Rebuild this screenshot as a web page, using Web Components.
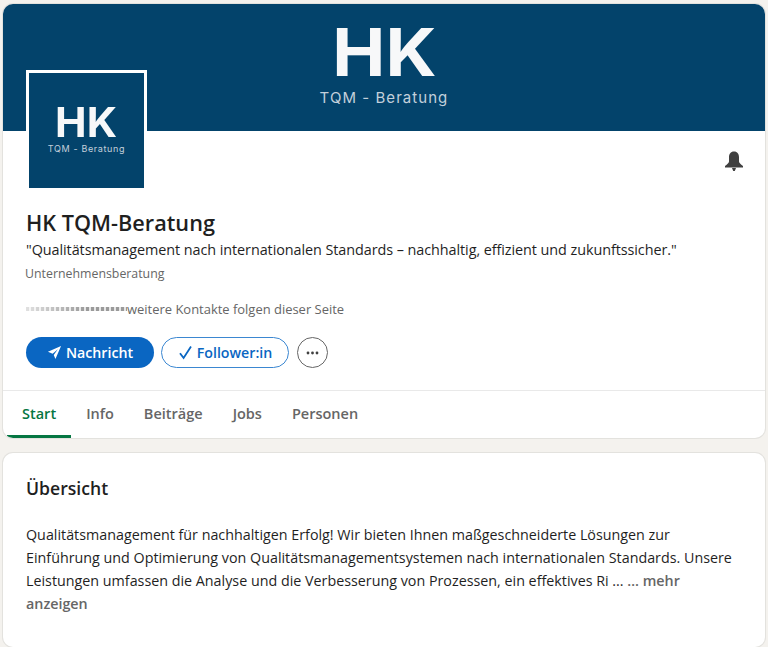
<!DOCTYPE html>
<html lang="de">
<head>
<meta charset="utf-8">
<title>HK TQM-Beratung</title>
<style>
  html, body { margin: 0; height: 647px; overflow: hidden; background: #f4f2ee; }
  body { font-family: "Open Sans", "Noto Sans", sans-serif; color: #1f1f1f; }
</style>
</head>
<body>
<template id="hk-logo-tpl">
  <style>
    :host { display: flex; flex-direction: column; align-items: center; color: #f7f8f9; font-family: Inter, "Liberation Sans", sans-serif; }
    .big { font-weight: 700; font-size: var(--big, 66px); line-height: var(--big-lh, 58px); transform: scaleX(var(--sx, 1.076)); }
    .small { font-weight: 400; color: #c3d0db; margin-top: var(--gap, 7px); font-size: var(--small, 15px); line-height: var(--small-lh, 20px); letter-spacing: .07em; white-space: nowrap; }
  </style>
  <div class="big">HK</div>
  <div class="small">TQM - Beratung</div>
</template>

<script>
  class HkLogo extends HTMLElement {
    connectedCallback() {
      this.attachShadow({ mode: 'open' });
      this.shadowRoot.appendChild(document.getElementById('hk-logo-tpl').content.cloneNode(true));
    }
  }
  customElements.define('hk-logo', HkLogo);

  class PageCard extends HTMLElement {
    connectedCallback() {
      this.attachShadow({ mode: 'open' });
      this.shadowRoot.innerHTML = `
        <style>
          :host {
            display: block;
            margin: 0 3px;
            background: #fff;
            border-radius: 10px;
            box-shadow: 0 0 0 1px rgba(140, 140, 140, .16);
            overflow: hidden;
          }
        </style>
        <slot></slot>
      `;
    }
  }
  customElements.define('page-card', PageCard);

  class CompanyHeader extends HTMLElement {
    connectedCallback() {
      this.attachShadow({ mode: 'open' });
      this.shadowRoot.innerHTML = `
        <style>
          :host { display: block; }
          .banner { height: 127px; background: #03436b; display: flex; justify-content: center; padding-top: 19px; box-sizing: border-box; }
          .body { display: flow-root; position: relative; padding: 0 23px; height: 259px; box-sizing: border-box; }
          .avatar {
            width: 115px; height: 82.5px; margin-top: -61px;
            position: relative;
            border: 3px solid #fff;
            background: #03436b;
            display: flex; justify-content: center; padding-top: 32.5px;
            --big: 41px; --big-lh: 33px; --small: 9px; --small-lh: 14px; --gap: 3.5px; --sx: 1.03;
          }
          h1 { margin: 17px 0 0; font-size: 21.7px; line-height: 30px; font-weight: 600; color: #1f1f1f; }
          .tag { margin: 1px 0 0; font-size: 14.4px; letter-spacing: -.07px; line-height: 22px; color: #1f1f1f; white-space: nowrap; }
          .cat { margin: 3px 0 0 -1px; font-size: 12.35px; line-height: 20px; color: #666; }
          .follow { display: flex; align-items: center; margin-top: 15px; font-size: 12.96px; line-height: 20px; font-weight: 500; color: #666; }
          .faces { width: 101px; height: 4px; filter: blur(.7px); background: repeating-linear-gradient(90deg, #9a9a9a 0 3px, #e6e6e6 3px 5px); -webkit-mask-image: linear-gradient(90deg, rgba(0,0,0,.3), #000 60%); }
          .actions { display: flex; align-items: center; gap: 7px; margin-top: 18px; }
          .bell { position: absolute; right: 21px; top: 20px; width: 20px; height: 20px; }
        </style>
        <div class="banner"><hk-logo></hk-logo></div>
        <div class="body">
          <div class="avatar"><hk-logo></hk-logo></div>
          <svg class="bell" viewBox="0 0 20 20" fill="#404040"><path d="M10 0.5C6.6 0.5 5 3.2 5 6.2V10.5C5 12 3.4 13 1 15V16.5H19V15C16.6 13 15 12 15 10.5V6.2C15 3.2 13.4 0.5 10 0.5Z"/><path d="M8 17H12L10.8 20H9.2Z"/></svg>
          <h1>HK TQM-Beratung</h1>
          <p class="tag">"Qualitätsmanagement nach internationalen Standards – nachhaltig, effizient und zukunftssicher."</p>
          <div class="cat">Unternehmensberatung</div>
          <div class="follow"><span class="faces"></span><span>weitere Kontakte folgen dieser Seite</span></div>
          <div class="actions">
            <pill-button kind="solid" width="128">
              <svg slot="icon" width="15" height="15" viewBox="0 0 16 16" fill="#fff"><path d="M15 1 1 7.2 6 9.4 11.5 4.5 7.2 10.6 9 15Z"/></svg>
              Nachricht
            </pill-button>
            <pill-button kind="outline" width="128">
              <svg slot="icon" width="15" height="15" viewBox="0 0 15 15" fill="none" stroke="#0a66c2" stroke-width="1.8"><path d="M2 8.2 5.6 13 13 1.5"/></svg>
              Follower:in
            </pill-button>
            <more-button></more-button>
          </div>
        </div>
      `;
    }
  }
  customElements.define('company-header', CompanyHeader);

  class PillButton extends HTMLElement {
    connectedCallback() {
      const solid = this.getAttribute('kind') === 'solid';
      this.attachShadow({ mode: 'open' });
      this.shadowRoot.innerHTML = `
        <style>
          :host {
            display: inline-flex; align-items: center; justify-content: center; gap: 4px;
            box-sizing: border-box;
            width: ${this.getAttribute('width')}px; height: 31px;
            border-radius: 16px;
            font-size: 14.2px; font-weight: 600; white-space: nowrap;
            background: ${solid ? '#0a66c2' : '#fff'};
            color: ${solid ? '#fff' : '#0a66c2'};
            border: ${solid ? '0' : '1px solid #3b87d1'};
          }
        </style>
        <slot name="icon"></slot><slot></slot>
      `;
    }
  }
  customElements.define('pill-button', PillButton);

  class MoreButton extends HTMLElement {
    connectedCallback() {
      this.attachShadow({ mode: 'open' });
      this.shadowRoot.innerHTML = `
        <style>
          :host { display: inline-flex; align-items: center; justify-content: center; box-sizing: border-box; width: 31px; height: 31px; border: 1px solid #666; border-radius: 50%; margin-left: 1px; }
        </style>
        <svg width="13" height="4" viewBox="0 0 13 4" fill="#404040"><circle cx="2" cy="2" r="1.4"/><circle cx="6.5" cy="2" r="1.4"/><circle cx="11" cy="2" r="1.4"/></svg>
      `;
    }
  }
  customElements.define('more-button', MoreButton);

  class TabBar extends HTMLElement {
    connectedCallback() {
      this.attachShadow({ mode: 'open' });
      this.shadowRoot.innerHTML = `
        <style>
          :host { display: flex; box-sizing: border-box; height: 48px; padding-left: 4px; border-top: 1px solid #e9e9e9; font-size: 14.5px; font-weight: 600; color: #666; }
        </style>
        <slot></slot>
      `;
    }
  }
  customElements.define('tab-bar', TabBar);

  class TabItem extends HTMLElement {
    connectedCallback() {
      const on = this.hasAttribute('active');
      this.attachShadow({ mode: 'open' });
      this.shadowRoot.innerHTML = `
        <style>
          :host {
            display: flex; align-items: center; box-sizing: border-box; height: 47px;
            padding: 1px 15px 0;
            color: ${on ? '#057642' : '#666'};
            border-bottom: 3px solid ${on ? '#057642' : 'transparent'};
          }
        </style>
        <slot></slot>
      `;
    }
  }
  customElements.define('tab-item', TabItem);

  class OverviewSection extends HTMLElement {
    connectedCallback() {
      this.attachShadow({ mode: 'open' });
      this.shadowRoot.innerHTML = `
        <style>
          :host { display: block; padding: 22px 24px 40px 23px; height: 194px; box-sizing: border-box; }
          h2 { margin: 0; font-size: 17.6px; line-height: 26px; font-weight: 600; color: #1f1f1f; }
          p { margin: 22px 0 0; font-size: 14.3px; line-height: 23px; color: #1f1f1f; }
        </style>
        <h2><slot name="title"></slot></h2>
        <p><slot></slot></p>
      `;
    }
  }
  customElements.define('overview-section', OverviewSection);
</script>

<div style="height:4px"></div>
<page-card>
  <company-header></company-header>
  <tab-bar>
    <tab-item active>Start</tab-item>
    <tab-item>Info</tab-item>
    <tab-item>Beiträge</tab-item>
    <tab-item>Jobs</tab-item>
    <tab-item>Personen</tab-item>
  </tab-bar>
</page-card>
<div style="height:15px"></div>
<page-card>
  <overview-section>
    <span slot="title">Übersicht</span>
    Qualitätsmanagement für nachhaltigen Erfolg! Wir bieten Ihnen maßgeschneiderte Lösungen zur Einführung und Optimierung von Qualitätsmanagementsystemen nach internationalen Standards. Unsere Leistungen umfassen die Analyse und die Verbesserung von Prozessen, ein effektives Ri ... <span style="font-weight:600;color:#666">… mehr anzeigen</span>
  </overview-section>
</page-card>
</body>
</html>
